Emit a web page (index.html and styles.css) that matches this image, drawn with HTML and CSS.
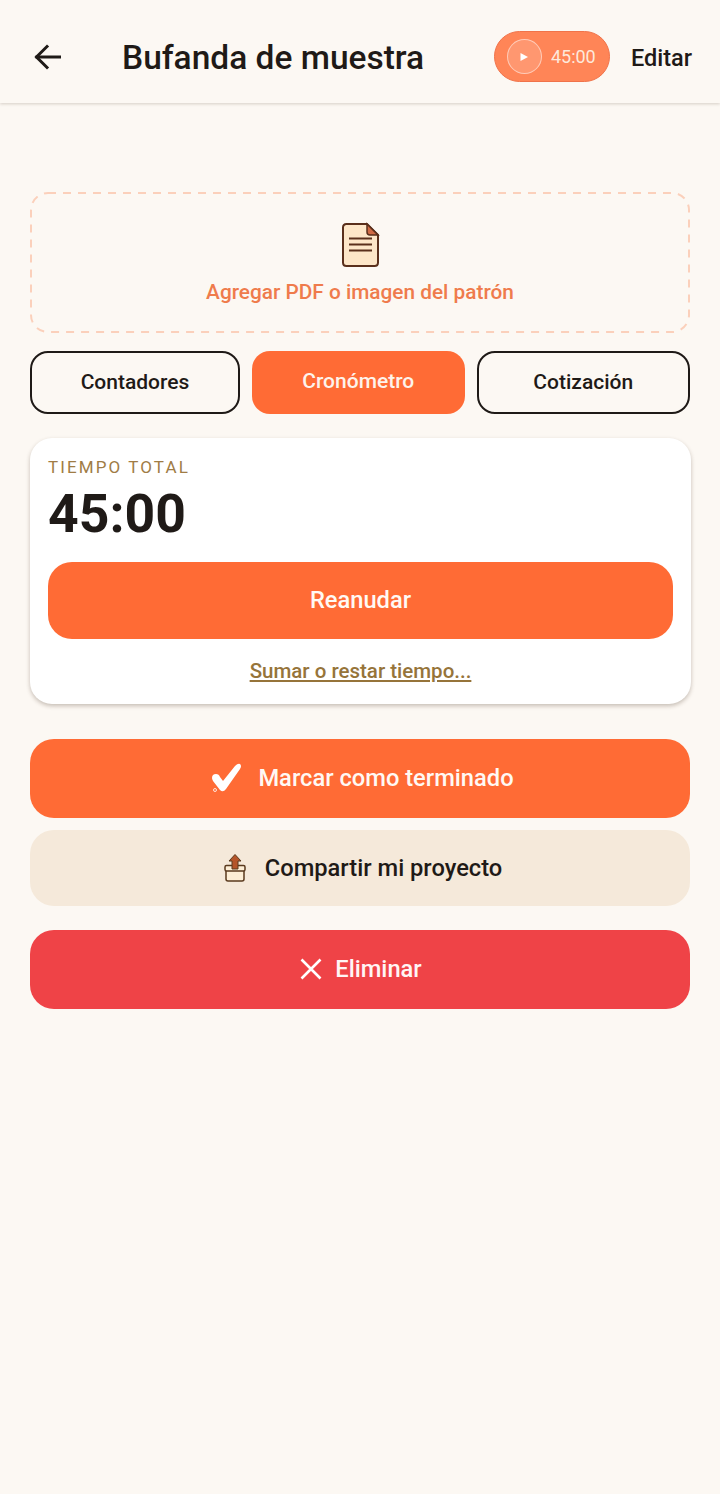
FILE: index.html
```html
<!DOCTYPE html>
<html lang="es">
<head>
<meta charset="utf-8">
<title>Bufanda de muestra</title>
<link rel="stylesheet" href="styles.css">
</head>
<body>
<header class="topbar">
  <button class="back" aria-label="Volver">
    <svg width="32" height="32" viewBox="0 0 32 32" fill="none" stroke="#1f1a17" stroke-width="3" stroke-linecap="square"><path d="M5 16H27.500"/><path d="M15 5.500L4.500 16L15 26.500"/></svg>
  </button>
  <h1 class="title">Bufanda de muestra</h1>
  <div class="timer-pill">
    <span class="timer-play"><svg width="10" height="10" viewBox="0 0 10 10"><path d="M1.500 1L9 5L1.500 9Z" fill="#fff"/></svg></span>
    <span class="timer-text">45:00</span>
  </div>
  <span class="edit">Editar</span>
</header>

<main class="content">
  <section class="dropzone">
    <svg class="dropzone-border" width="660" height="141" viewBox="0 0 660 141" fill="none"><rect x="1" y="1" width="658" height="139" rx="17" stroke="#fbd0bb" stroke-width="2" stroke-dasharray="8 7"/></svg>
    <svg width="40" height="46" viewBox="0 0 40 46">
      <path d="M3 5.500Q3 2 6.500 2H27L38 13V40.500Q38 44 34.500 44H6.500Q3 44 3 40.500Z" fill="#fde6c8" stroke="#5a2f1b" stroke-width="2"/>
      <path d="M27 2L38 13H30Q27 13 27 10Z" fill="#cf6a45" stroke="#5a2f1b" stroke-width="1.500"/>
      <path d="M9 16.500H32M9 22.500H32M9 28.500H32" stroke="#5a2f1b" stroke-width="2"/>
    </svg>
    <span class="dropzone-label">Agregar PDF o imagen del patrón</span>
  </section>

  <nav class="tabs">
    <button class="tab">Contadores</button>
    <button class="tab tab-active">Cronómetro</button>
    <button class="tab">Cotización</button>
  </nav>

  <section class="card">
    <div class="card-label">TIEMPO TOTAL</div>
    <div class="card-time">45:00</div>
    <button class="resume">Reanudar</button>
    <a class="adjust" href="#">Sumar o restar tiempo...</a>
  </section>

  <button class="action action-done">
    <svg width="32" height="30" viewBox="0 0 32 30"><path d="M2 15Q2 11 6 11Q9 11 10 14L13 18L25 3Q28 0 30 1Q32 3 30 6L16 26Q13 30 10 27L3 18Q2 16 2 15Z" fill="#fff"/><circle cx="5" cy="27" r="1.500" fill="none" stroke="#fff" stroke-width="0.800"/></svg>
    Marcar como terminado
  </button>
  <button class="action action-share">
    <svg width="22" height="28" viewBox="0 0 22 28">
      <path d="M2 15H20V25Q20 27 18 27H4Q2 27 2 25Z" fill="#fdeed6" stroke="#5a3a1e" stroke-width="1.500"/>
      <rect x="1" y="11.500" width="20" height="5.500" rx="1.500" fill="#fdeed6" stroke="#5a3a1e" stroke-width="1.500"/>
      <path d="M11 0.500L17 7H14V15H8V7H5Z" fill="#b5552a" stroke="#5a3a1e" stroke-width="1"/>
    </svg>
    Compartir mi proyecto
  </button>
  <button class="action action-delete">
    <svg width="24" height="24" viewBox="0 0 24 24" fill="none" stroke="#fff" stroke-width="2.600"><path d="M2.500 2.500L21.500 21.500M21.500 2.500L2.500 21.500"/></svg>
    Eliminar
  </button>
</main>
</body>
</html>
```
FILE: styles.css
```css
body {
   margin: 0;
   height: 1494px;
   overflow: hidden;
   background-color: #fcf8f3;
   color: #1f1a17;
   font-family: Roboto, "Liberation Sans", sans-serif;
}

button {
   font-family: inherit;
   border: none;
   padding: 0;
}

.topbar {
   height: 103px;
   box-sizing: border-box;
   display: flex;
   align-items: center;
   padding: 10px 28px 0 32px;
   box-shadow: 0 1px 3px rgba(60, 40, 20, 0.2);
}

.back {
   width: 32px;
   height: 32px;
   background: none;
   flex: none;
}

.title {
   margin: 2px 0 0 58px;
   font-size: 33.500px;
   font-weight: 500;
   flex: 1;
   white-space: nowrap;
}

.timer-pill {
   width: 116px;
   height: 51px;
   box-sizing: border-box;
   display: flex;
   align-items: center;
   gap: 9px;
   padding-left: 12px;
   border: 1px solid #f0734a;
   border-radius: 26px;
   background-color: #ff8557;
   color: #fde9dc;
}

.timer-play {
   width: 35px;
   height: 35px;
   box-sizing: border-box;
   display: flex;
   align-items: center;
   justify-content: center;
   border: 1.500px solid rgba(255, 255, 255, 0.5);
   border-radius: 50%;
   background-color: rgba(255, 255, 255, 0.15);
}

.timer-text {
   font-size: 18px;
}

.edit {
   margin: 2px 0 0 21px;
   font-size: 23.500px;
   font-weight: 500;
}

.content {
   display: flex;
   flex-direction: column;
   padding: 89px 30px 0;
}

.dropzone {
   height: 141px;
   box-sizing: border-box;
   position: relative;
   display: flex;
   flex-direction: column;
   align-items: center;
   padding-top: 30px;
   gap: 12px;
}

.dropzone-border {
   position: absolute;
   top: 0;
   left: 0;
}

.dropzone-label {
   font-size: 20.800px;
   font-weight: 500;
   color: #ef7b4c;
}

.tabs {
   display: grid;
   grid-template-columns: 210px 213.500px 213.500px;
   gap: 11.500px;
   margin-top: 18px;
}

.tab {
   height: 63px;
   box-sizing: border-box;
   padding-bottom: 2px;
   border: 2px solid #1f1a17;
   border-radius: 18px;
   background: none;
   color: #1f1a17;
   font-size: 21px;
   font-weight: 500;
}

.tab-active {
   border: none;
   padding-bottom: 4px;
   background-color: #ff6b35;
   color: #fdf3ec;
}

.card {
   height: 266px;
   box-sizing: border-box;
   display: flex;
   flex-direction: column;
   margin-top: 24px;
   margin-right: -1px;
   padding: 19px 18px 0;
   border-radius: 22px;
   background-color: #fff;
   box-shadow: 0 2px 4px rgba(60, 40, 20, 0.28);
}

.card-label {
   font-size: 17px;
   line-height: 20px;
   letter-spacing: 2.100px;
   color: #a07c45;
}

.card-time {
   margin-top: 4px;
   font-size: 53.500px;
   line-height: 66px;
   font-weight: 700;
}

.resume {
   height: 77px;
   margin-top: 15px;
   padding-bottom: 1px;
   border-radius: 24px;
   background-color: #ff6b35;
   color: #fff9f4;
   font-size: 23.700px;
   font-weight: 500;
}

.adjust {
   margin-top: 20px;
   text-align: center;
   font-size: 20.500px;
   font-weight: 500;
   color: #96743a;
}

.action {
   display: flex;
   align-items: center;
   justify-content: center;
   gap: 16px;
   padding-bottom: 2px;
   border-radius: 24px;
   font-size: 23.700px;
   font-weight: 500;
}

.action-done {
   height: 79px;
   margin-top: 35px;
   padding-left: 4px;
   background-color: #ff6b35;
   color: #fff9f4;
}

.action-share {
   height: 76px;
   margin-top: 12px;
   padding-left: 6px;
   padding-bottom: 0;
   gap: 19px;
   background-color: #f5e9da;
   color: #1f1a17;
}

.action-delete {
   height: 79px;
   margin-top: 24px;
   padding-left: 1px;
   gap: 12px;
   background-color: #ef4347;
   color: #fff5f5;
}
```
